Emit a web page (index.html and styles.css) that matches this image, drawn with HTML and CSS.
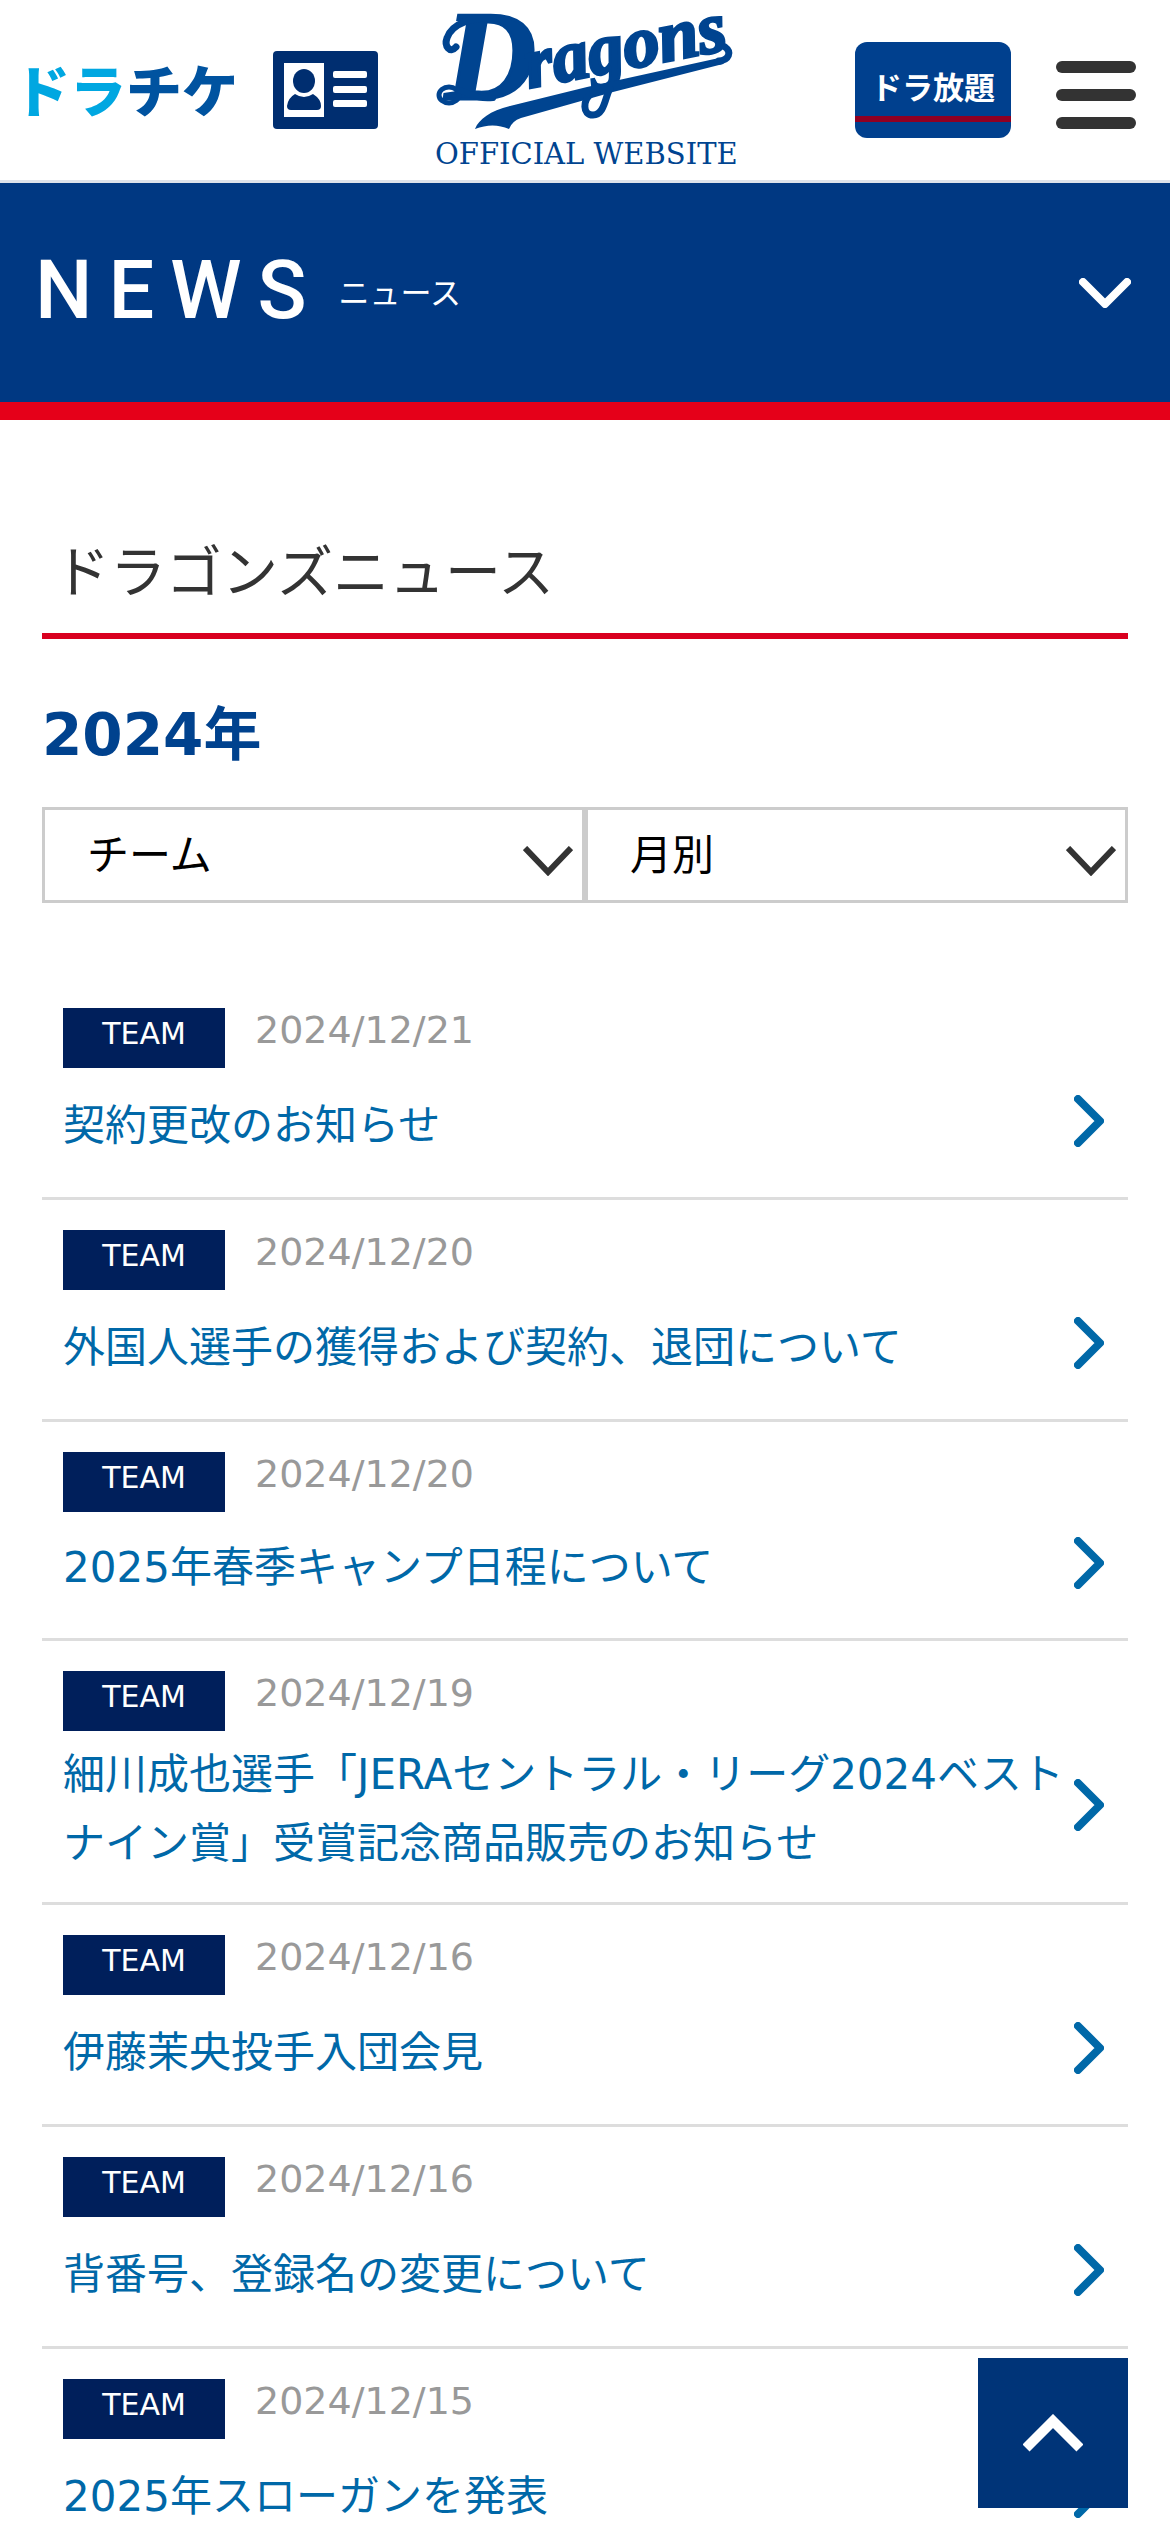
FILE: index.html
```html
<!DOCTYPE html>
<html lang="ja">
<head>
<meta charset="utf-8">
<meta name="viewport" content="width=device-width, initial-scale=1">
<title>ドラゴンズニュース</title>
<link rel="stylesheet" href="styles.css">
</head>
<body>
<header class="site-header">
  <nav class="header-links" aria-label="サービス">
    <a class="ticket-link" href="#ticket"><span class="ticket-light">ドラ</span>チケ</a>
    <a class="card-link" href="#member" aria-label="会員証">
      <svg class="card-icon" viewBox="0 0 105 78" aria-hidden="true">
        <rect width="105" height="78" rx="4" fill="#002e70"/>
        <rect x="11" y="12" width="40" height="54" fill="#fff"/>
        <ellipse cx="31" cy="30" rx="11" ry="12" fill="#002e70"/>
        <path d="M22 43Q31 49 40 43Q48 48 48 55Q48 59 44 59H18Q14 59 14 55Q15 47 22 43Z" fill="#002e70"/>
        <g fill="#fff"><rect x="60" y="20" width="34" height="7" rx="2"/><rect x="60" y="35" width="34" height="7" rx="2"/><rect x="60" y="49" width="34" height="7" rx="2"/></g>
      </svg>
    </a>
  </nav>
  <a class="logo-link" href="#top">
    <svg class="logo" viewBox="0 0 300 160" role="img" aria-label="Dragons OFFICIAL WEBSITE">
      <text class="logo-initial" x="10" y="89">D</text>
      <text class="logo-script" transform="translate(94 78) rotate(-11)">ragons</text>
      <g fill="none" stroke="#004490" stroke-linecap="round">
        <path d="M21 37C15 44 9 36 12 28C17 13 38 7 58 8" stroke-width="7"/>
        <ellipse cx="14" cy="85" rx="10" ry="8" stroke-width="5"/>
        <path d="M23 80C34 82 40 90 58 88" stroke-width="6"/>
        <path d="M284 51C294 50 297 42 290 37" stroke-width="7"/>
      </g>
      <path d="M40 119C44 109 55 101 75 96L152 77L284 48Q293 48 290 52Q288 55 284 55L178 82L86 108Q77 111 74 119Q58 112 40 119Z" fill="#004490"/>
      <path d="M176 76C170 86 170 105 158 105C147 105 148 90 156 84" fill="none" stroke="#004490" stroke-width="7"/>
      <text class="logo-caption" x="0" y="154">OFFICIAL WEBSITE</text>
    </svg>
  </a>
  <div class="header-actions">
    <a class="plan-link" href="#houdai"><span class="plan-text">ドラ放題</span></a>
    <button class="menu-button" type="button" aria-label="メニュー"><span class="menu-bar"></span><span class="menu-bar"></span><span class="menu-bar"></span></button>
  </div>
</header>

<div class="page-banner">
  <h1 class="banner-title">NEWS<span class="banner-sub">ニュース</span></h1>
  <button class="banner-toggle" type="button" aria-label="ニュースメニューを開く">
    <svg class="banner-chevron" viewBox="0 0 52 30" aria-hidden="true"><path d="M4 4L26 26L48 4" fill="none" stroke="#fff" stroke-width="8" stroke-linecap="round" stroke-linejoin="round"/></svg>
  </button>
</div>

<main class="content">
  <h2 class="section-title">ドラゴンズニュース</h2>
  <h3 class="year-title">2024年</h3>
  <form class="filters">
    <select class="filter" aria-label="カテゴリ"><option>チーム</option></select>
    <select class="filter" aria-label="月"><option>月別</option></select>
  </form>

  <svg class="symbols" aria-hidden="true"><symbol id="arrow" viewBox="0 0 30 52"><path d="M4 4L26 26L4 48" fill="none" stroke="#0068a8" stroke-width="8" stroke-linecap="round" stroke-linejoin="round"/></symbol></svg>

  <ul class="news-list">
    <li class="news-item">
      <div class="news-meta"><span class="news-tag">TEAM</span><time class="news-date" datetime="2024-12-21">2024/12/21</time></div>
      <a class="news-link" href="#n1"><span class="news-title">契約更改のお知らせ</span><svg class="news-arrow" aria-hidden="true"><use href="#arrow"/></svg></a>
    </li>
    <li class="news-item">
      <div class="news-meta"><span class="news-tag">TEAM</span><time class="news-date" datetime="2024-12-20">2024/12/20</time></div>
      <a class="news-link" href="#n2"><span class="news-title">外国人選手の獲得および契約、退団について</span><svg class="news-arrow" aria-hidden="true"><use href="#arrow"/></svg></a>
    </li>
    <li class="news-item news-item-compact">
      <div class="news-meta"><span class="news-tag">TEAM</span><time class="news-date" datetime="2024-12-20">2024/12/20</time></div>
      <a class="news-link" href="#n3"><span class="news-title">2025年春季キャンプ日程について</span><svg class="news-arrow" aria-hidden="true"><use href="#arrow"/></svg></a>
    </li>
    <li class="news-item">
      <div class="news-meta"><span class="news-tag">TEAM</span><time class="news-date" datetime="2024-12-19">2024/12/19</time></div>
      <a class="news-link" href="#n4"><span class="news-title">細川成也選手「JERAセントラル・リーグ2024ベストナイン賞」受賞記念商品販売のお知らせ</span><svg class="news-arrow" aria-hidden="true"><use href="#arrow"/></svg></a>
    </li>
    <li class="news-item">
      <div class="news-meta"><span class="news-tag">TEAM</span><time class="news-date" datetime="2024-12-16">2024/12/16</time></div>
      <a class="news-link" href="#n5"><span class="news-title">伊藤茉央投手入団会見</span><svg class="news-arrow" aria-hidden="true"><use href="#arrow"/></svg></a>
    </li>
    <li class="news-item">
      <div class="news-meta"><span class="news-tag">TEAM</span><time class="news-date" datetime="2024-12-16">2024/12/16</time></div>
      <a class="news-link" href="#n6"><span class="news-title">背番号、登録名の変更について</span><svg class="news-arrow" aria-hidden="true"><use href="#arrow"/></svg></a>
    </li>
    <li class="news-item">
      <div class="news-meta"><span class="news-tag">TEAM</span><time class="news-date" datetime="2024-12-15">2024/12/15</time></div>
      <a class="news-link" href="#n7"><span class="news-title">2025年スローガンを発表</span><svg class="news-arrow" aria-hidden="true"><use href="#arrow"/></svg></a>
    </li>
  </ul>
</main>

<a class="to-top" href="#top" aria-label="ページの先頭へ">
  <svg class="to-top-icon" viewBox="0 0 60 38" aria-hidden="true"><path d="M3 34L30 7L57 34" fill="none" stroke="#fff" stroke-width="10"/></svg>
</a>
</body>
</html>
```

FILE: styles.css
```css
* {
  box-sizing: border-box;
}

body {
  margin: 0;
  background: #fff;
  color: #333;
  font-family: "DejaVu Sans", "Noto Sans CJK JP", sans-serif;
  font-size: 42px;
}

h1, h2, h3, ul {
  margin: 0;
  padding: 0;
  font-weight: 400;
}

a {
  text-decoration: none;
}

button {
  padding: 0;
  border: 0;
  background: none;
}

svg {
  display: block;
}

/* Header */
.site-header {
  display: grid;
  grid-template-columns: 1fr auto 1fr;
  align-items: center;
  height: 183px;
  border-bottom: 3px solid #dde2ea;
}

.header-links {
  display: flex;
  align-items: center;
  gap: 35px;
  padding-left: 14px;
}

.ticket-link {
  padding-bottom: 4px;
  color: #0053a0;
  font-family: "Noto Sans CJK JP", sans-serif;
  font-size: 56px;
  font-weight: 900;
  line-height: 60px;
}

.ticket-light {
  color: #00a7e1;
}

.card-icon {
  width: 105px;
  height: 78px;
}

.logo {
  width: 300px;
  height: 160px;
  overflow: visible;
  fill: #004490;
}

.logo-initial {
  font: italic 700 126px "Liberation Serif", serif;
  stroke: #004490;
  stroke-width: 3px;
}

.logo-script {
  font: italic 700 72px "Liberation Serif", serif;
  stroke: #004490;
  stroke-width: 3px;
}

.logo-caption {
  font: 29px "DejaVu Serif", serif;
}

.header-actions {
  display: flex;
  align-items: center;
  justify-content: flex-end;
  gap: 45px;
  padding-right: 34px;
}

.plan-link {
  display: flex;
  flex-direction: column;
  justify-content: center;
  width: 156px;
  height: 96px;
  border-radius: 12px;
  background: linear-gradient(#00408e 74px, #8f0022 74px 80px, #00408e 80px);
  color: #fff;
  font-family: "Noto Sans CJK JP", sans-serif;
  font-size: 31px;
  font-weight: 700;
  line-height: 36px;
  text-align: center;
}

.plan-text {
  padding-bottom: 8px;
}

.menu-button {
  display: grid;
  gap: 16px;
  width: 80px;
  padding-top: 10px;
}

.menu-bar {
  height: 12px;
  border-radius: 6px;
  background: #333;
}

/* Page banner */
.page-banner {
  display: flex;
  align-items: center;
  justify-content: space-between;
  height: 237px;
  padding: 0 39px 0 35px;
  border-bottom: 18px solid #e50019;
  background: #003882;
  color: #fff;
}

.banner-title {
  display: flex;
  align-items: center;
  gap: 16px;
  padding-bottom: 4px;
  font-family: Roboto, sans-serif;
  font-size: 81px;
  font-weight: 500;
  letter-spacing: 16px;
  line-height: 96px;
}

.banner-sub {
  font-family: "Noto Sans CJK JP", sans-serif;
  font-size: 31px;
  font-weight: 400;
  letter-spacing: 0;
}

.banner-chevron {
  width: 52px;
  height: 30px;
}

/* Content */
.content {
  padding: 111px 42px 0;
}

.section-title {
  padding: 0 12px 18px;
  border-bottom: 6px solid #d9001f;
  font-size: 56px;
  line-height: 84px;
}

.year-title {
  padding: 54px 0 30px;
  color: #00428e;
  font-size: 58px;
  font-weight: 700;
  line-height: 84px;
}

.filters {
  display: grid;
  grid-template-columns: 1fr 1fr;
}

.filter {
  height: 96px;
  padding: 0 42px;
  border: 3px solid #ccc;
  border-radius: 0;
  appearance: none;
  background: url("data:image/svg+xml,%3Csvg xmlns='http://www.w3.org/2000/svg' viewBox='0 0 50 30'%3E%3Cpath d='M2 2L25 26L48 2' fill='none' stroke='%23333' stroke-width='6'/%3E%3C/svg%3E") no-repeat right 9px top 36px / 50px 30px #fff;
  color: #000;
  font: inherit;
}

.symbols {
  width: 0;
  height: 0;
}

.news-list {
  margin-top: 75px;
  list-style: none;
}

.news-item {
  padding: 30px 24px 24px 21px;
  border-bottom: 3px solid #ddd;
}

.news-meta {
  display: flex;
  gap: 30px;
  height: 60px;
}

.news-tag {
  width: 162px;
  background: #001f5b;
  color: #fff;
  font-size: 30px;
  line-height: 51px;
  text-align: center;
}

.news-date {
  color: #999;
  font-size: 38px;
  line-height: 45px;
}

.news-link {
  display: flex;
  align-items: center;
  justify-content: space-between;
  min-height: 96px;
  margin-top: 9px;
  color: #0068a8;
}

.news-item-compact .news-link {
  min-height: 93px;
}

.news-title {
  flex: 1;
  line-height: 69px;
}

.news-arrow {
  width: 30px;
  height: 52px;
  margin-bottom: 9px;
}

.to-top {
  position: fixed;
  right: 42px;
  bottom: 24px;
  display: grid;
  place-items: center;
  width: 150px;
  height: 150px;
  background: #003478;
}

.to-top-icon {
  width: 60px;
  height: 38px;
}
```
